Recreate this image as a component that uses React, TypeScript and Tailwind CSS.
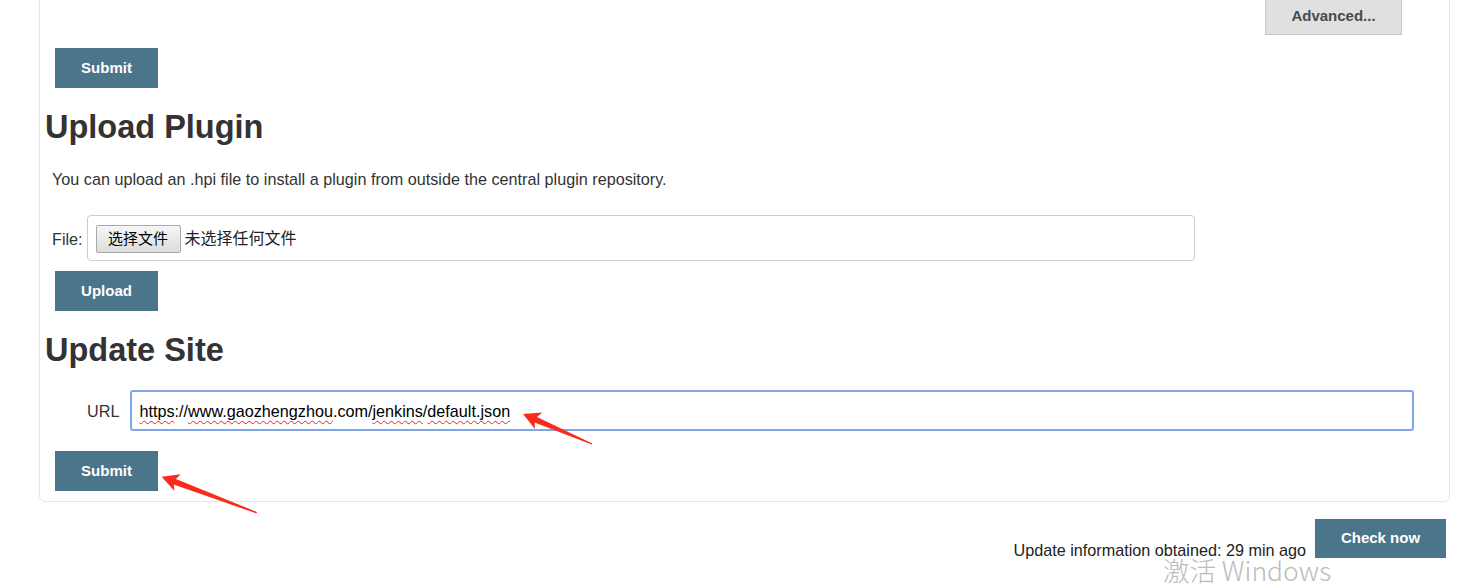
import React from "react";

// Jenkins "Advanced" plugin page, lower part
function BlueButton({ children, className = "" }: { children: React.ReactNode; className?: string }) {
  return (
    <button className={`block h-[40px] w-[103px] bg-[#4b758b] text-[15px] font-bold text-white ${className}`}>
      {children}
    </button>
  );
}

function Squiggle({ children }: { children: React.ReactNode }) {
  return (
    <span className="underline decoration-[#e0261b] decoration-wavy decoration-1 underline-offset-[3px]">{children}</span>
  );
}

export default function App() {
  return (
    <div className="relative h-[585px] w-full overflow-hidden bg-white font-['Liberation_Sans','Noto_Sans_CJK_SC',sans-serif] text-[#333]">
      <div className="-mt-[20px] ml-[39px] mr-[10px] rounded-md border border-[#e6e6e6] pb-[10px] pl-[5px] pr-[33px] pt-[17px]">
        <div className="flex justify-end">
          <button className="mr-[14px] h-[37px] w-[137px] border border-[#c8c8c8] bg-[#e0e0e0] text-[15px] font-bold text-[#4a4a4a]">
            Advanced...
          </button>
        </div>
        <BlueButton className="mt-[13px] ml-[10px]">Submit</BlueButton>

        <h2 className="mt-[21px] text-[32.5px] font-bold leading-[36px] text-[#333]">Upload Plugin</h2>
        <p className="mt-[22px] ml-[7px] text-[16.2px] leading-[24px]">
          You can upload an .hpi file to install a plugin from outside the central plugin repository.
        </p>

        <div className="mt-[24px] ml-[7px] flex items-center">
          <span className="mt-[3px] text-[16.2px]">File:</span>
          <div className="ml-[4px] flex h-[46px] w-[1108px] items-center rounded-[4px] border border-[#cccccc] pl-[8px] pt-[2px]">
            <button className="h-[28px] w-[85px] rounded-[2px] border border-[#a9a9a9] bg-gradient-to-b from-[#f6f6f6] to-[#dddddd] text-[15px] text-black">
              选择文件
            </button>
            <span className="ml-[4px] text-[16px] text-[#222]">未选择任何文件</span>
          </div>
        </div>
        <BlueButton className="mt-[10px] ml-[10px]">Upload</BlueButton>

        <h2 className="mt-[21px] text-[32.5px] font-bold leading-[36px] text-[#333]">Update Site</h2>
        <div className="mt-[22px] flex items-center">
          <span className="ml-[42px] mt-[2px] text-[16.2px]">URL</span>
          <div className="ml-[11px] flex h-[41px] w-[1284px] items-center rounded-[3px] border-2 border-[#7fa7e8] pl-[7px] pt-[2px] text-[16.2px] text-black">
            <Squiggle>https</Squiggle>://<Squiggle>www.gaozhengzhou</Squiggle>.com/<Squiggle>jenkins</Squiggle>/
            <Squiggle>default.json</Squiggle>
          </div>
        </div>
        <BlueButton className="mt-[20px] ml-[10px]">Submit</BlueButton>
      </div>

      <div className="mt-[17px] flex justify-end pr-[14px]">
        <span className="mt-[19px] text-[16.2px] leading-[24px] text-[#222]">Update information obtained: 29 min ago</span>
        <button className="ml-[9px] h-[39px] w-[131px] bg-[#4b758b] text-[15px] font-bold text-white">Check now</button>
      </div>

      {/* windows activation watermark */}
      <div className="pointer-events-none absolute left-[1163px] top-[556px] whitespace-nowrap font-['Noto_Sans_CJK_SC',sans-serif] text-[26.5px] font-light leading-[28px] text-[#bcbcbc]">
        激活 Windows
      </div>

      {/* screenshot annotation arrows */}
      <svg className="pointer-events-none absolute inset-0 h-full w-full" viewBox="0 0 1460 585">
        <polygon
          fill="#fa2a1c"
          points="523,414 542.2,412.5 537,416.9 592.3,443.4 591.7,444.6 534.6,422.4 535,429.1"
        />
        <polygon
          fill="#fa2a1c"
          points="161.7,476.7 180.8,474.3 175.9,478.9 256.9,512 256.5,513.4 173.7,484.5 174.4,491.1"
        />
      </svg>
    </div>
  );
}
